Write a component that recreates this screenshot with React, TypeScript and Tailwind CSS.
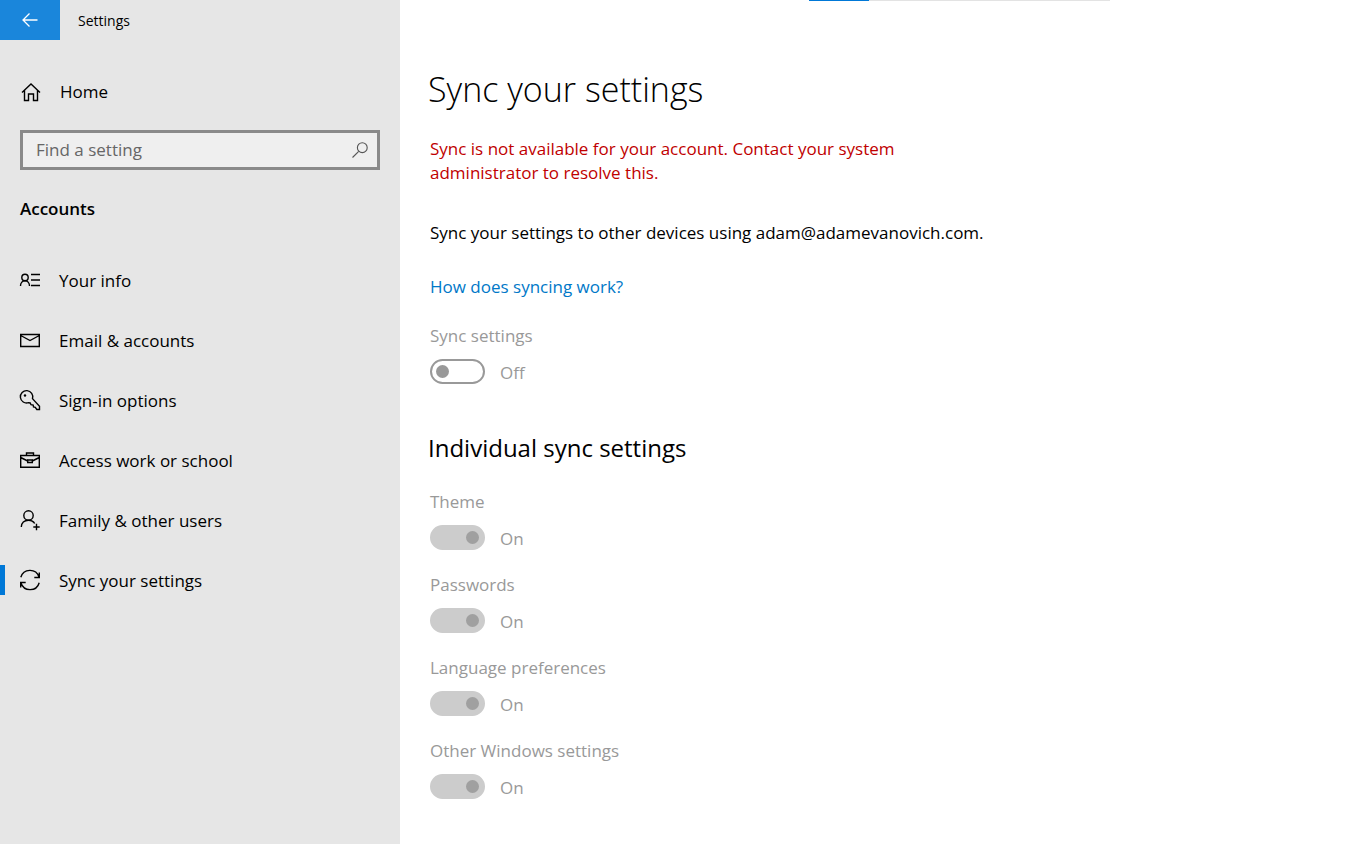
import { useState } from 'react';
import type { ReactNode } from 'react';

interface NavItem {
  id: string;
  label: string;
  icon: ReactNode;
}

interface SyncToggleProps {
  id: string;
  label: string;
  checked: boolean;
}

const Icon = ({ children }: { children: ReactNode }) => (
  <svg
    className="w-[22px] h-[22px] shrink-0"
    viewBox="0 0 22 22"
    fill="none"
    stroke="currentColor"
    strokeWidth={1.4}
    aria-hidden="true"
  >
    {children}
  </svg>
);

const navItems: NavItem[] = [
  {
    id: 'info',
    label: 'Your info',
    icon: (
      <Icon>
        <circle cx="6" cy="8.5" r="3.2" />
        <path d="M1.5 17c0-3 2-5.2 4.5-5.2s4.500 2.200 4.500 5.200M12 5.500h9M12 11h9M12 16.500h9" />
      </Icon>
    ),
  },
  {
    id: 'email',
    label: 'Email & accounts',
    icon: (
      <Icon>
        <path d="M1.7 5.5h18.6v12H1.7zM1.7 6.500 11 11.500l9.300-5" />
      </Icon>
    ),
  },
  {
    id: 'signin',
    label: 'Sign-in options',
    icon: (
      <Icon>
        <path d="M13.5 9.6a6.2 6.2 0 1 0-4 4.100l1.700 0.300 0.800 1.700 2.200 0.300 0.300 2 1.800 0.300 1.500 2.200h2.700v-3.300z" />
        <circle cx="6" cy="6.5" r="1.2" fill="currentColor" stroke="none" />
      </Icon>
    ),
  },
  {
    id: 'work',
    label: 'Access work or school',
    icon: (
      <Icon>
        <path d="M1.7 6.500h18.600v11.800H1.700zM7.500 6.500V4h7v2.500M1.700 8.500l7 3.500M20.300 8.500l-7 3.500M8.700 11h4.600v2.500H8.700z" />
      </Icon>
    ),
  },
  {
    id: 'family',
    label: 'Family & other users',
    icon: (
      <Icon>
        <circle cx="9.500" cy="6.500" r="4.700" />
        <path d="M2.300 18c0-4 3-6.800 7.200-6.800 2.800 0 5 1.200 6.200 3.300M17.500 14.800v6.400M14.300 18h6.400" />
      </Icon>
    ),
  },
  {
    id: 'sync',
    label: 'Sync your settings',
    icon: (
      <Icon>
        <path d="M1.800 8.300A9.500 9.500 0 0 1 20 8M20.300 3.500v5h-5M20.200 13.700A9.500 9.500 0 0 1 2 14M1.700 18.500v-5h5" />
      </Icon>
    ),
  },
];

const syncOptions = [
  { id: 'theme', label: 'Theme' },
  { id: 'passwords', label: 'Passwords' },
  { id: 'language', label: 'Language preferences' },
  { id: 'other', label: 'Other Windows settings' },
];

const SyncToggle = ({ id, label, checked }: SyncToggleProps) => (
  <div className="text-[#999999]">
    <label htmlFor={id} className="block w-fit">
      {label}
    </label>
    <div className="flex items-center gap-[15px] mt-[11px] h-[25px]">
      <input
        id={id}
        type="checkbox"
        role="switch"
        checked={checked}
        disabled
        readOnly
        className="appearance-none flex items-center w-[55px] h-[25px] px-1 shrink-0 rounded-full border-2 border-[#999999] before:block before:w-[13px] before:h-[13px] before:rounded-full before:bg-[#999999] checked:border-[#cccccc] checked:bg-[#cccccc] checked:justify-end checked:before:bg-[#a0a0a0]"
      />
      <span className="pt-0.5">{checked ? 'On' : 'Off'}</span>
    </div>
  </div>
);

const Sidebar = () => {
  const [active, setActive] = useState('sync');
  const [query, setQuery] = useState('');

  return (
    <aside className="w-[400px] shrink-0 bg-[#e6e6e6]">
      <header className="flex items-center h-10">
        <button type="button" aria-label="Back" className="flex items-center justify-center w-[60px] h-10 bg-[#1a86db] text-white">
          <svg className="w-4 h-4" viewBox="0 0 16 16" fill="none" stroke="currentColor" strokeWidth={1.3}>
            <path d="M15.500 8H1M7.500 1.500 1 8l6.500 6.500" />
          </svg>
        </button>
        <span className="ml-[18px] pt-0.5 text-sm">Settings</span>
      </header>

      <button type="button" className="flex items-center gap-[18px] mt-8 w-full h-10 px-5">
        <Icon>
          <path d="M2 11.500 11 3l9 8.500M4.500 9.500v10h4v-6.500h5v6.500h4v-10" />
        </Icon>
        <span>Home</span>
      </button>

      <div className="flex items-center mx-5 mt-[18px] h-10 px-[13px] border-[3px] border-[#8a8a8a] bg-[#efefef]">
        <input
          type="text"
          aria-label="Find a setting"
          placeholder="Find a setting"
          value={query}
          onChange={(e) => setQuery(e.target.value)}
          className="flex-1 min-w-0 bg-transparent outline-none placeholder:text-[#666666]"
        />
        <svg className="w-4 h-4 -mr-1 text-[#555555]" viewBox="0 0 16 16" fill="none" stroke="currentColor" strokeWidth={1.1}>
          <circle cx="10.300" cy="5.700" r="4.900" />
          <path d="M6.700 9.300.500 15.500" />
        </svg>
      </div>

      <h2 className="mt-[27px] px-5 font-semibold">Accounts</h2>

      <nav className="mt-[29px]">
        {navItems.map((item) => (
          <button
            key={item.id}
            type="button"
            onClick={() => setActive(item.id)}
            className="flex items-center w-full h-[60px]"
          >
            <span className={`w-[5px] h-[30px] mr-[14px] ${active === item.id ? 'bg-[#0078d7]' : ''}`}></span>
            {item.icon}
            <span className="ml-[18px] pt-0.5">{item.label}</span>
          </button>
        ))}
      </nav>
    </aside>
  );
};

const App = () => {
  return (
    <div className="flex min-h-screen bg-white text-black font-['Open_Sans','Noto_Sans',sans-serif] text-[17px] leading-6">
      <Sidebar />

      <main className="flex-1 min-w-0">
        <div className="w-[301px] h-px ml-[409px] bg-[#e3e3e3]">
          <div className="w-[60px] h-px bg-[#0078d7]"></div>
        </div>

        <div className="px-[30px] pt-16 pb-8">
          <h1 className="-ml-0.5 text-[34px] leading-[48px] font-[350]">Sync your settings</h1>
          <p className="mt-6 max-w-[500px] text-[#c00000]">
            Sync is not available for your account. Contact your system administrator to resolve this.
          </p>
          <p className="mt-9">Sync your settings to other devices using adam@adamevanovich.com.</p>
          <a href="#syncing" className="block w-fit mt-[30px] mb-[25px] text-[#0078c8]">
            How does syncing work?
          </a>
          <SyncToggle id="sync-all" label="Sync settings" checked={false} />

          <h2 className="-ml-0.5 mt-12 mb-[26px] text-2xl">Individual sync settings</h2>
          <div className="flex flex-col gap-[23px]">
            {syncOptions.map((option) => (
              <SyncToggle key={option.id} id={option.id} label={option.label} checked />
            ))}
          </div>
        </div>
      </main>
    </div>
  );
};

export default App;
